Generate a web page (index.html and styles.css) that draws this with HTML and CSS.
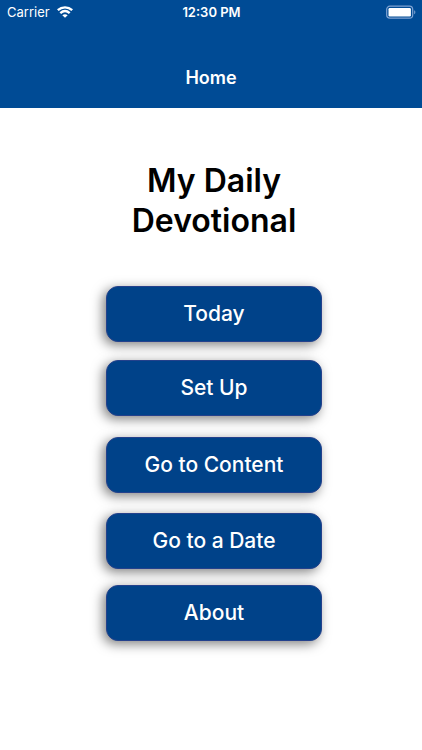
FILE: index.html
```html
<!DOCTYPE html>
<html lang="en">
<head>
<meta charset="utf-8">
<meta name="viewport" content="width=device-width, initial-scale=1">
<title>My Daily Devotional</title>
<link rel="stylesheet" href="styles.css">
</head>
<body>
<header class="header">
  <div class="status">
    <div class="status-carrier">
      <span>Carrier</span>
      <svg width="16" height="12" viewBox="0 0 16 12" fill="none" stroke="#fff" stroke-width="2.4" aria-hidden="true">
        <path d="M.8 4.200C5 .4 11 .4 15.200 4.200"/>
        <path d="M3.300 7.200C6.200 4.600 9.800 4.600 12.700 7.200"/>
        <path d="M8 11.800 5.300 9.200C7 7.800 9 7.800 10.700 9.200Z" fill="#fff" stroke="none"/>
      </svg>
    </div>
    <span class="status-time">12:30 PM</span>
    <svg class="status-battery" width="30" height="14" viewBox="0 0 30 14" aria-hidden="true">
      <rect x=".7" y="1.200" width="26" height="12" rx="3.200" fill="none" stroke="#7fa3d2" stroke-width="1.200"/>
      <rect x="2.500" y="3" width="22.400" height="8.400" rx="1.200" fill="#fff"/>
      <path d="M28.200 5.200C29.800 5.800 29.800 8.600 28.200 9.200Z" fill="#7fa3d2"/>
    </svg>
  </div>
  <div class="nav-title">Home</div>
</header>
<main class="home">
  <h1 class="title">My Daily<br>Devotional</h1>
  <nav class="menu">
    <button class="menu-button" type="button">Today</button>
    <button class="menu-button" type="button">Set Up</button>
    <button class="menu-button" type="button">Go to Content</button>
    <button class="menu-button" type="button">Go to a Date</button>
    <button class="menu-button" type="button">About</button>
  </nav>
</main>
</body>
</html>
```
FILE: styles.css
```css
* {
  box-sizing: border-box;
}

body {
  margin: 0;
  background: #fff;
  color: #000;
  font-family: Inter, "Liberation Sans", sans-serif;
}

.header {
  background: #004b95;
  color: #fff;
  padding-bottom: 18px;
}

.status {
  display: grid;
  grid-template-columns: 1fr auto 1fr;
  align-items: center;
  height: 24px;
  padding: 0 6px 0 7px;
  font-size: 13px;
}

.status-carrier {
  display: flex;
  align-items: center;
  gap: 7px;
}

.status-time {
  font-weight: 600;
}

.status-battery {
  justify-self: end;
}

.nav-title {
  margin-top: 42px;
  font-size: 18px;
  line-height: 24px;
  font-weight: 600;
  text-align: center;
}

.home {
  display: flex;
  flex-direction: column;
  align-items: center;
  padding: 53px 0 40px 6px;
}

.title {
  margin: 0 0 45px;
  font-size: 32px;
  line-height: 40px;
  font-weight: 600;
  text-align: center;
}

.menu {
  display: flex;
  flex-direction: column;
  width: 52%;
}

.menu-button {
  height: 56px;
  margin: 0 0 18px;
  padding: 0;
  border: 1px solid #24418c;
  border-radius: 12px;
  background: #004289;
  color: #fff;
  font: 500 21px/28px Inter, "Liberation Sans", sans-serif;
  box-shadow: -3px 3px 12px rgba(0, 0, 0, 0.5);
}

.menu-button:nth-child(2) {
  margin-bottom: 21px;
}

.menu-button:nth-child(3) {
  margin-bottom: 20px;
}

.menu-button:nth-child(4) {
  margin-bottom: 16px;
}
```
